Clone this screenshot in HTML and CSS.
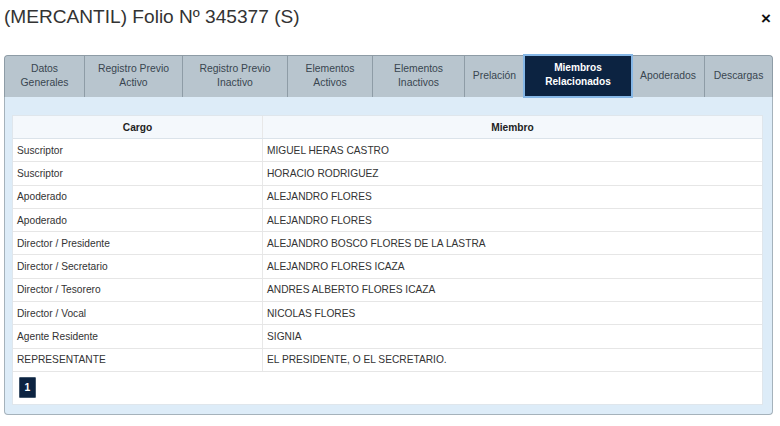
FILE: index.html
```html
<!DOCTYPE html>
<html lang="es">
<head>
<meta charset="utf-8">
<title>Folio</title>
<link rel="stylesheet" href="styles.css">
</head>
<body>
<div class="modal">
  <div class="modal-header">
    <h1 class="title">(MERCANTIL) Folio Nº 345377 (S)</h1>
    <span class="close">×</span>
  </div>
  <div class="tabs">
    <div class="tab">Datos<br>Generales</div>
    <div class="tab">Registro Previo<br>Activo</div>
    <div class="tab">Registro Previo<br>Inactivo</div>
    <div class="tab">Elementos<br>Activos</div>
    <div class="tab">Elementos<br>Inactivos</div>
    <div class="tab">Prelación</div>
    <div class="tab active">Miembros<br>Relacionados</div>
    <div class="tab">Apoderados</div>
    <div class="tab">Descargas</div>
  </div>
  <div class="panel">
    <div class="grid">
      <table class="table">
        <thead>
          <tr><th class="c1">Cargo</th><th>Miembro</th></tr>
        </thead>
        <tbody>
          <tr><td class="c1">Suscriptor</td><td>MIGUEL HERAS CASTRO</td></tr>
          <tr><td class="c1">Suscriptor</td><td>HORACIO RODRIGUEZ</td></tr>
          <tr><td class="c1">Apoderado</td><td>ALEJANDRO FLORES</td></tr>
          <tr><td class="c1">Apoderado</td><td>ALEJANDRO FLORES</td></tr>
          <tr><td class="c1">Director / Presidente</td><td>ALEJANDRO BOSCO FLORES DE LA LASTRA</td></tr>
          <tr><td class="c1">Director / Secretario</td><td>ALEJANDRO FLORES ICAZA</td></tr>
          <tr><td class="c1">Director / Tesorero</td><td>ANDRES ALBERTO FLORES ICAZA</td></tr>
          <tr><td class="c1">Director / Vocal</td><td>NICOLAS FLORES</td></tr>
          <tr><td class="c1">Agente Residente</td><td>SIGNIA</td></tr>
          <tr><td class="c1">REPRESENTANTE</td><td>EL PRESIDENTE, O EL SECRETARIO.</td></tr>
        </tbody>
      </table>
      <div class="pager"><span class="page">1</span></div>
    </div>
  </div>
</div>
</body>
</html>
```

FILE: styles.css
```css
html, body {
  margin: 0;
  padding: 0;
  background: #ffffff;
}
body {
  font-family: "Liberation Sans", Arial, sans-serif;
  color: #333333;
}
.modal {
  width: 780px;
  height: 426px;
  box-sizing: border-box;
  padding: 0 7px 0 4px;
}
.modal-header {
  display: flex;
  justify-content: space-between;
  align-items: flex-start;
  height: 55px;
}
.title {
  margin: 0;
  padding-top: 6px;
  font-size: 19.1px;
  font-weight: normal;
  line-height: 22px;
  color: #333333;
}
.close {
  font-size: 17px;
  font-weight: bold;
  line-height: 17px;
  margin-top: 10px;
  margin-right: 2px;
  color: #111111;
}
.tabs {
  display: grid;
  grid-template-columns: 79px 98px 105px 85px 92px 60px 108px 72px 68px;
  height: 41px;
  border: 1px solid #8e9ca6;
  border-bottom: none;
  border-radius: 4px 4px 0 0;
  background: #b8c5ce;
}
.tab {
  display: flex;
  align-items: center;
  justify-content: center;
  text-align: center;
  font-size: 10.4px;
  line-height: 14px;
  padding-bottom: 2px;
  color: #394650;
  border-left: 1px solid #8e9ca6;
  background: #b8c5ce;
}
.tab:first-child {
  border-left: none;
  border-top-left-radius: 4px;
}
.tab:last-child {
  border-top-right-radius: 4px;
}
.tab.active {
  position: relative;
  z-index: 1;
  background: #0c2341;
  color: #ffffff;
  font-weight: bold;
  font-size: 10.1px;
  margin: -2px -1px -1px -1px;
  border: 2px solid #86b7e6;
}
.tab.active + .tab {
  border-left: none;
}
.panel {
  height: 318px;
  box-sizing: border-box;
  border: 1px solid #a5b2bb;
  border-top: none;
  border-radius: 0 0 4px 4px;
  background: #ddecf8;
  padding: 18px 9px 9px 7px;
}
.grid {
  background: #ffffff;
  border: 1px solid #dfe6ec;
}
.table {
  width: 100%;
  border-collapse: collapse;
  font-size: 10.2px;
}
.table th {
  height: 22px;
  font-weight: bold;
  font-size: 10.2px;
  color: #222222;
  background: #f4f8fc;
  border-bottom: 1px solid #dbe3ea;
  text-align: center;
  padding: 0;
}
.table td {
  height: 22.3px;
  padding: 0 4px;
  color: #333333;
  border-bottom: 1px solid #e6e6e6;
  white-space: nowrap;
}
.table .c1 {
  width: 241px;
  border-right: 1px solid #e8e8e8;
}
.pager {
  height: 32px;
  display: flex;
  align-items: center;
  padding-left: 6px;
}
.page {
  display: inline-flex;
  align-items: center;
  justify-content: center;
  width: 17px;
  height: 21px;
  background: #0c2341;
  color: #ffffff;
  font-weight: bold;
  font-size: 10.4px;
  border-radius: 1px;
  border: 1px solid #42566c;
  box-sizing: border-box;
}
```
